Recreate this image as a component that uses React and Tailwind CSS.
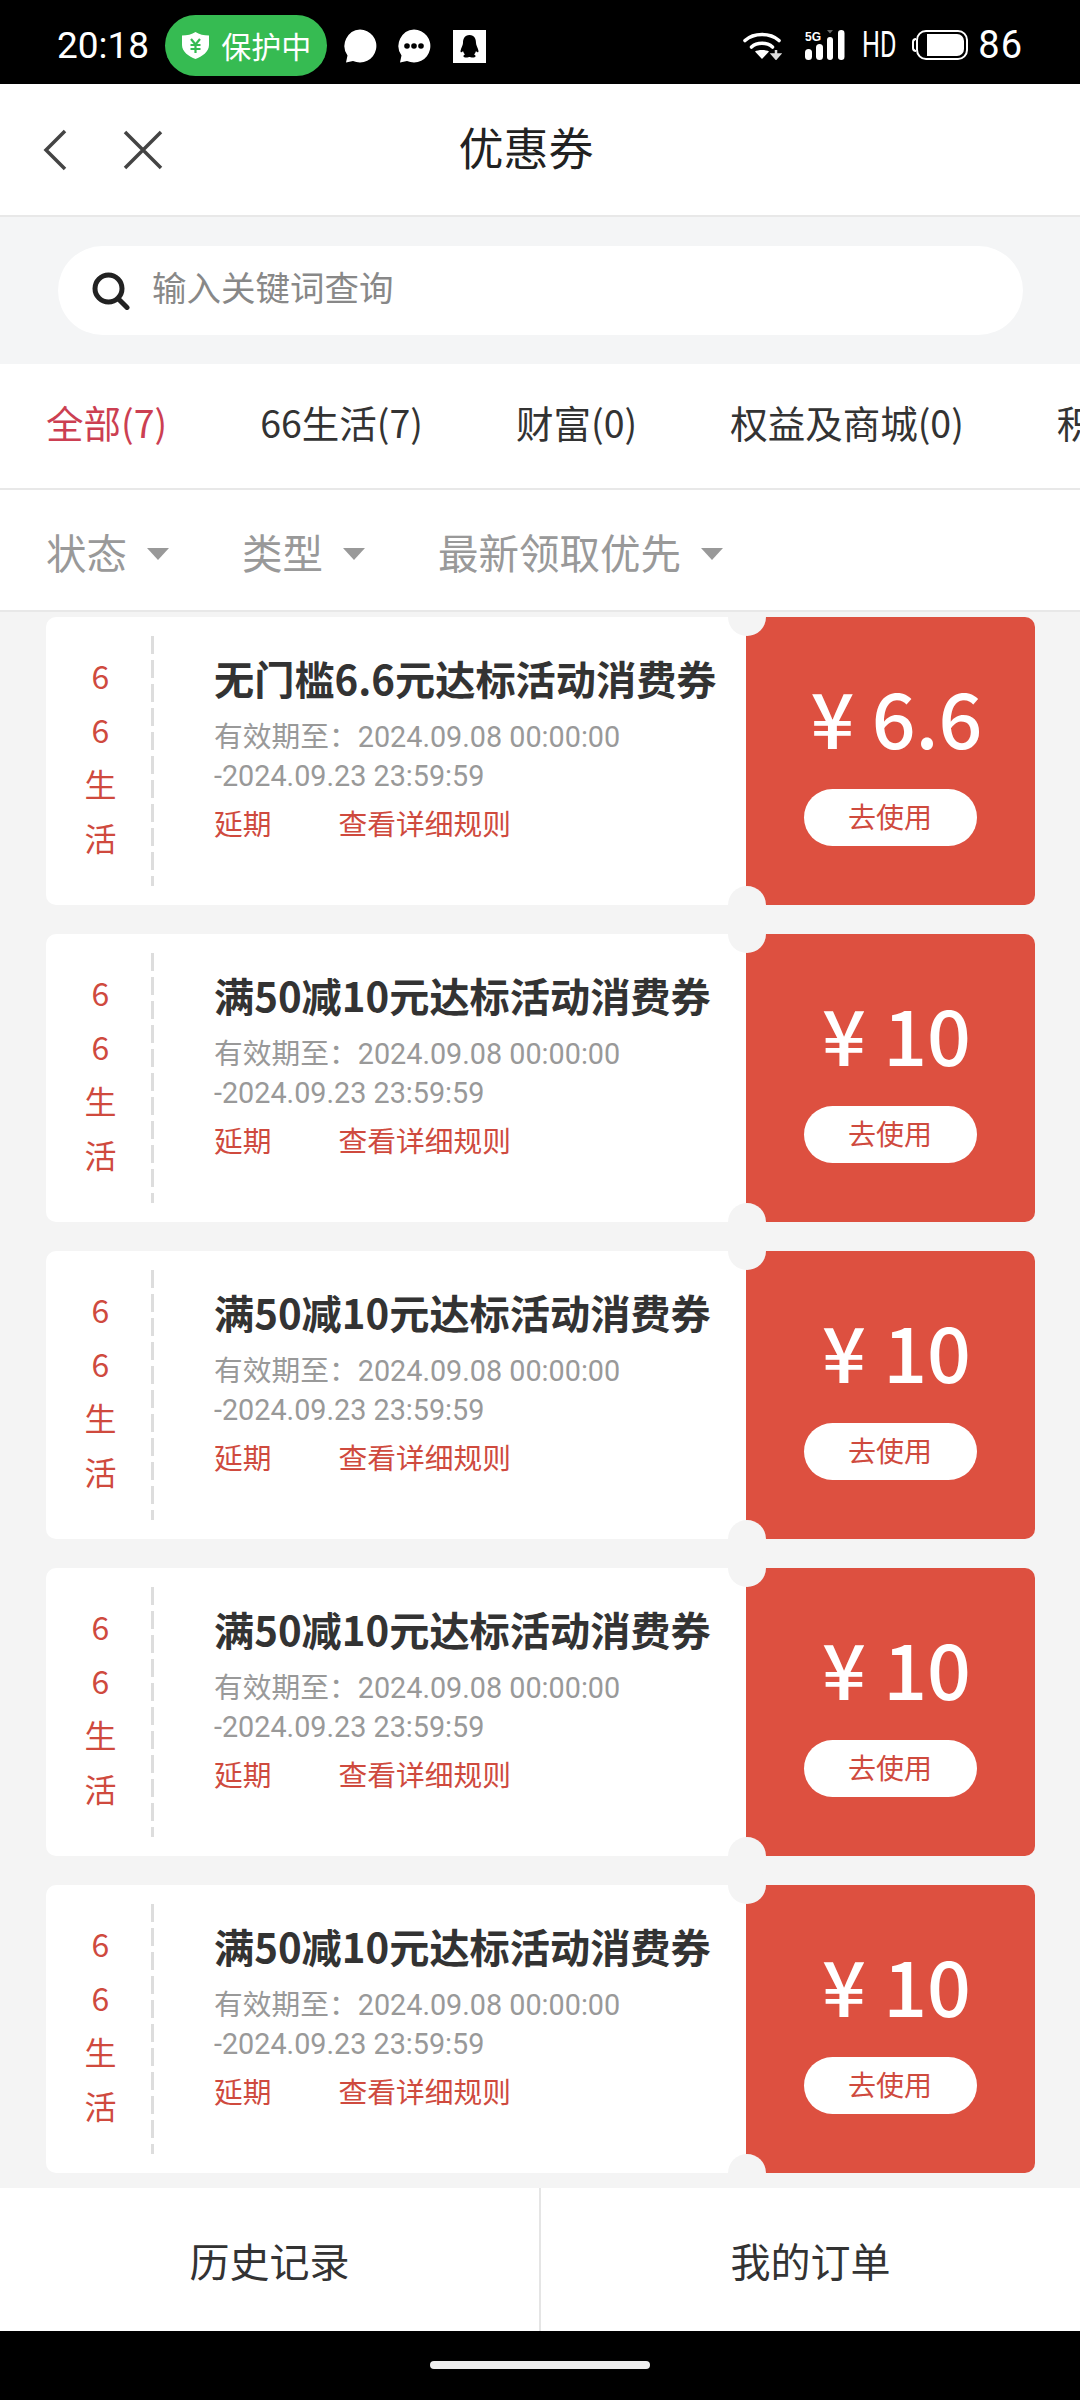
import React from 'react';

const cjk = "font-['Noto_Sans_CJK_SC','Noto_Sans',sans-serif]";
const roboto = "font-['Roboto','Noto_Sans_CJK_SC',sans-serif]";

const coupons = [
  { title: '无门槛6.6元达标活动消费券', price: '6.6' },
  { title: '满50减10元达标活动消费券', price: '10' },
  { title: '满50减10元达标活动消费券', price: '10' },
  { title: '满50减10元达标活动消费券', price: '10' },
  { title: '满50减10元达标活动消费券', price: '10' },
];

const tabs = ['66生活(7)', '财富(0)', '权益及商城(0)', '积分(0)'];
const filters = ['状态', '类型', '最新领取优先'];

const StatusBar = () => (
  <div className="flex h-[84px] shrink-0 items-center bg-black pl-[57px] pr-[57px] pt-[6px] text-white">
    <span className={`${roboto} text-[37px] leading-none`}>20:18</span>
    <div className="ml-[16px] flex h-[61px] w-[162px] items-center rounded-full bg-[#36bb52] pl-4">
      <svg width="29" height="27" viewBox="0 0 29 27">
        <path d="M14.5 0C18 2.5 23 3.5 28 3.5V13C28 20 21 24.5 14.5 27C8 24.5 1 20 1 13V3.5C6 3.5 11 2.5 14.5 0Z" fill="#fff" />
        <path d="M10 7l4.5 5.5L19 7M9.5 13h10M9.5 17h10M14.5 12v9" stroke="#36bb52" strokeWidth="2.2" fill="none" />
      </svg>
      <span className={`${cjk} ml-[11px] text-[30px] leading-none`}>保护中</span>
    </div>
    <svg className="ml-[16px] mt-[2px]" width="34" height="34" viewBox="0 0 34 34">
      <path d="M17 0.5a16.500 16.500 0 1 1 -7 31.500l-7 1.500l1.500 -7A16.500 16.500 0 0 1 17 0.500Z" fill="#fff" />
    </svg>
    <svg className="ml-[20px] mt-[2px]" width="34" height="34" viewBox="0 0 34 34">
      <path d="M17 0.5a16.500 16.500 0 1 1 -7 31.500l-7 1.500l1.500 -7A16.500 16.500 0 0 1 17 0.500Z" fill="#fff" />
      <circle cx="10" cy="17" r="2.800" fill="#000" />
      <circle cx="17" cy="17" r="2.800" fill="#000" />
      <circle cx="24" cy="17" r="2.800" fill="#000" />
    </svg>
    <svg className="ml-[22px] mt-[2px]" width="33" height="33" viewBox="0 0 33 33">
      <rect width="33" height="33" fill="#fff" />
      <path d="M16.500 5C11.500 5 10 9 10 13C10 15 8 18 7.500 21C7.500 23 9 22.500 10 21C10.500 23 11.500 24 12 24.500C10 25 9.500 27.500 13 27.500C15 27.500 16 27 16.500 27C17 27 18 27.500 20 27.500C23.500 27.500 23 25 21 24.500C21.500 24 22.500 23 23 21C24 22.500 25.500 23 25.500 21C25 18 23 15 23 13C23 9 21.500 5 16.500 5Z" fill="#000" />
    </svg>
    <div className="ml-auto flex items-center">
      <svg width="39" height="29" viewBox="0 0 39 29" fill="none">
        <path d="M2 9.500C11 1.500 27 1.500 36 9.500" stroke="#fff" strokeWidth="3.600" strokeLinecap="round" />
        <path d="M8.500 16C14 11 24 11 29.500 16" stroke="#fff" strokeWidth="3.600" strokeLinecap="round" />
        <path d="M12 20.500C15 18.500 23 18.500 26 20.500L19 28Z" fill="#fff" />
        <path d="M33 19v6M29.500 23.500h7l-3.500 4z" stroke="#ddd" strokeWidth="2.500" fill="#ddd" />
      </svg>
      <svg className="ml-[23px]" width="40" height="30" viewBox="0 0 40 30">
        <rect x="0" y="19" width="7" height="11" rx="3.500" fill="#fff" />
        <rect x="11" y="14" width="7" height="16" rx="3.500" fill="#fff" />
        <rect x="22" y="7" width="6" height="23" rx="3" fill="#fff" />
        <rect x="33" y="0" width="6.500" height="30" rx="3.200" fill="#fff" />
        <path d="M22 0h6l-3 3.500z" fill="#666" />
        <text x="0" y="11" fontSize="12" fontWeight="700" fill="#fff" fontFamily="Liberation Sans">5G</text>
      </svg>
      <span className={`${roboto} ml-[17px] w-[33px] origin-left scale-x-[0.7] text-[36px] leading-none`}>HD</span>
      <div className="ml-[17px] flex items-center">
        <div className="h-[14px] w-[4px] rounded-l-full border-y-2 border-l-2 border-white" />
        <div className="flex h-[30px] w-[52px] items-center rounded-[10px] border-2 border-white pl-[9px] pr-[2px]">
          <div className="h-[22px] w-full rounded-r-[7px] bg-white" />
        </div>
      </div>
      <span className={`${roboto} ml-[10px] text-[38px] leading-none tracking-[1px]`}>86</span>
    </div>
  </div>
);

const Coupon = ({ title, price }) => (
  <div className={`${cjk} relative flex h-[288px] shrink-0`}>
    <div className="flex flex-1 rounded-l-[10px] bg-white">
      <div className="flex w-[105px] flex-col items-center pl-[4px] pt-[31px] text-[32px] leading-[54px] text-[#cf4a3e]">
        <span>6</span>
        <span>6</span>
        <span>生</span>
        <span>活</span>
      </div>
      <div className="my-[19px] w-[3px] bg-[repeating-linear-gradient(to_bottom,#dddddd_0px,#dddddd_18px,transparent_18px,transparent_24px)]" />
      <div className="pl-[60px] pt-[36px]">
        <div className="text-[40.200px] font-bold leading-[50px] text-[#333]">{title}</div>
        <div className={`${roboto} mt-[15px] text-[28.750px] leading-[39px] text-[#999]`}>
          <div>有效期至：2024.09.08 00:00:00</div>
          <div>-2024.09.23 23:59:59</div>
        </div>
        <div className="mt-[7px] flex text-[28.750px] leading-[40px] text-[#cf4a3e]">
          <span>延期</span>
          <span className="ml-[67px]">查看详细规则</span>
        </div>
      </div>
    </div>
    <div className="flex w-[289px] flex-col items-center rounded-r-[10px] bg-[#dd5040] pt-[54px]">
      <div className="pl-[12px] text-[77px] font-medium leading-[90px] text-white">¥ {price}</div>
      <div className="ml-[-1px] mt-[28px] flex h-[57px] w-[173px] items-center justify-center rounded-full bg-white pb-[3px] text-[28px] text-[#cf4a3e]">
        去使用
      </div>
    </div>
    <div className="absolute left-[682px] top-[-19px] h-[38px] w-[38px] rounded-full bg-[#f4f4f4]" />
    <div className="absolute bottom-[-19px] left-[682px] h-[38px] w-[38px] rounded-full bg-[#f4f4f4]" />
  </div>
);

export default function App() {
  return (
    <div className={`${cjk} flex h-[2400px] w-[1080px] flex-col overflow-hidden bg-[#f4f4f4]`}>
      <StatusBar />

      <div className="relative flex h-[133px] shrink-0 items-center border-b-2 border-[#e8e8e8] bg-white">
        <svg className="ml-[43px]" width="24" height="42" viewBox="0 0 24 42" fill="none" stroke="#444" strokeWidth="3.500">
          <path d="M22 2L3 21L22 40" />
        </svg>
        <svg className="ml-[56px]" width="40" height="40" viewBox="0 0 40 40" fill="none" stroke="#444" strokeWidth="3.500">
          <path d="M2 2L38 38M38 2L2 38" />
        </svg>
        <div className="absolute inset-x-0 top-[34px] text-center text-[45px] leading-[58px] text-[#222] indent-[-28px]">优惠券</div>
      </div>

      <div className="flex h-[147px] shrink-0 items-center bg-[#f4f5f6] pl-[58px] pr-[57px]">
        <div className="flex h-[89px] w-full items-center rounded-full bg-white pl-[34px]">
          <svg width="38" height="38" viewBox="0 0 38 38" fill="none" stroke="#222" strokeWidth="5" strokeLinecap="round">
            <circle cx="16.500" cy="16.500" r="13.500" />
            <path d="M26.500 27L35 35.500" />
          </svg>
          <span className="ml-[22px] pb-[8px] text-[34.500px] leading-none text-[#888]">输入关键词查询</span>
        </div>
      </div>

      <div className="flex h-[126px] shrink-0 items-center gap-[93px] overflow-hidden whitespace-nowrap border-b-2 border-[#e8e8e8] bg-white pb-[7px] pl-[46px] text-[37.500px] text-[#333]">
        <span className="text-[#cc3f52]">全部(7)</span>
        {tabs.map((tab) => (
          <span key={tab}>{tab}</span>
        ))}
      </div>

      <div className="flex h-[122px] shrink-0 items-center gap-[73px] border-b-2 border-[#e8e8e8] bg-white pl-[46px] pt-[5px] text-[40.500px] text-[#999]">
        {filters.map((f) => (
          <div key={f} className="flex items-center">
            <span>{f}</span>
            <span className="ml-[20px] mt-[3px] h-0 w-0 border-x-[11px] border-t-[12px] border-x-transparent border-t-[#999]" />
          </div>
        ))}
      </div>

      <div className="flex h-[1576px] shrink-0 flex-col gap-[29px] overflow-hidden pl-[46px] pr-[45px] pt-[5px]">
        {coupons.map((c, i) => (
          <Coupon key={i} title={c.title} price={c.price} />
        ))}
      </div>

      <div className="flex h-[143px] shrink-0 bg-white text-[40px] text-[#333]">
        <div className="flex w-[541px] items-center justify-center border-r-2 border-[#e5e5e5]">历史记录</div>
        <div className="flex flex-1 items-center justify-center">我的订单</div>
      </div>

      <div className="flex flex-1 justify-center bg-black pt-[30px]">
        <div className="h-[8px] w-[220px] rounded-full bg-[#eee]" />
      </div>
    </div>
  );
}
